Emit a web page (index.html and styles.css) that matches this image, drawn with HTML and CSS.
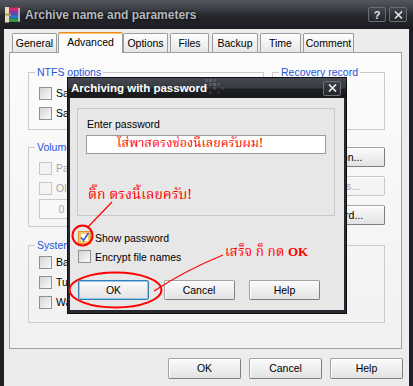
FILE: index.html
```html
<!DOCTYPE html>
<html lang="th">
<head>
  <meta charset="UTF-8" />
  <meta name="viewport" content="width=device-width, initial-scale=1.0"/>
  <title>Archive name and parameters</title>
  <link rel="stylesheet" href="styles.css">
</head>
<body>

<div class="window">
  <div class="titlebar">
    <svg class="app-icon" width="17" height="17" viewBox="0 0 17 17">
      <rect x="4" y="1.5" width="12" height="3.6" fill="#d02a6c"/>
      <rect x="4" y="5.1" width="12" height="3.6" fill="#7340b8"/>
      <rect x="4" y="8.7" width="12" height="3.6" fill="#2f6fd6"/>
      <rect x="4" y="12.3" width="12" height="3.6" fill="#2f9b4c"/>
      <rect x="14" y="2" width="2" height="13.5" fill="#f0e6c8" opacity="0.6"/>
      <rect x="1" y="1" width="4" height="15.5" fill="#e8dcb4"/>
      <rect x="1" y="7.5" width="6" height="2" fill="#b89a5a"/>
    </svg>
    <span class="title">Archive name and parameters</span>
    <div class="caption">
      <span class="cap-btn">?</span>
      <span class="cap-btn">
        <svg width="9" height="8" viewBox="0 0 9 8"><path d="M1 0.5 L8 7.5 M8 0.5 L1 7.5" stroke="#e4e4e4" stroke-width="1.6"/></svg>
      </span>
    </div>
  </div>

  <div class="client">
    <div class="tabs">
      <span class="tab">General</span>
      <span class="tab active">Advanced</span>
      <span class="tab">Options</span>
      <span class="tab">Files</span>
      <span class="tab">Backup</span>
      <span class="tab">Time</span>
      <span class="tab">Comment</span>
    </div>

    <div class="panel">
      <div class="row row-top">
        <fieldset class="group">
          <legend>NTFS options</legend>
          <label class="check"><span class="box"></span>Save file security</label>
          <label class="check"><span class="box"></span>Save file streams</label>
        </fieldset>
        <fieldset class="group">
          <legend>Recovery record</legend>
        </fieldset>
      </div>

      <div class="row row-mid">
        <fieldset class="group">
          <legend>Volumes</legend>
          <label class="check off"><span class="box"></span>Pause after each volume</label>
          <label class="check off"><span class="box"></span>Old style volume names</label>
          <div class="spin-row">
            <span class="spin">0</span>
            <span class="off-text">recovery volumes</span>
          </div>
        </fieldset>
        <div class="side-btns">
          <span class="btn">Compression...</span>
          <span class="btn off">SFX options...</span>
          <span class="btn">Set password...</span>
        </div>
      </div>

      <fieldset class="group system">
        <legend>System</legend>
        <label class="check"><span class="box"></span>Background archiving</label>
        <label class="check"><span class="box"></span>Turn off computer when done</label>
        <label class="check"><span class="box"></span>Wait if other WinRAR copies are active</label>
      </fieldset>
    </div>

    <div class="footer">
      <span class="btn">OK</span>
      <span class="btn">Cancel</span>
      <span class="btn">Help</span>
    </div>
  </div>

  <!-- password dialog on top -->
  <div class="dialog">
    <div class="dlg-title">
      <span>Archiving with password</span>
      <svg class="dots" width="24" height="20" viewBox="0 0 24 20">
        <rect x="0" y="1" width="3" height="3" fill="#fff" opacity="0.10"/>
        <rect x="4" y="1" width="3" height="3" fill="#fff" opacity="0.16"/>
        <rect x="8" y="1" width="3" height="3" fill="#fff" opacity="0.10"/>
        <rect x="4" y="5" width="3" height="3" fill="#fff" opacity="0.12"/>
        <rect x="8" y="5" width="3" height="3" fill="#fff" opacity="0.18"/>
        <rect x="12" y="5" width="3" height="3" fill="#fff" opacity="0.10"/>
        <rect x="0" y="9" width="3" height="3" fill="#fff" opacity="0.08"/>
        <rect x="8" y="9" width="3" height="3" fill="#fff" opacity="0.12"/>
        <rect x="16" y="9" width="3" height="3" fill="#fff" opacity="0.08"/>
        <rect x="4" y="13" width="3" height="3" fill="#fff" opacity="0.10"/>
        <rect x="12" y="13" width="3" height="3" fill="#fff" opacity="0.08"/>
      </svg>
      <span class="dlg-close">
        <svg width="9" height="8" viewBox="0 0 9 8"><path d="M1 0.5 L8 7.5 M8 0.5 L1 7.5" stroke="#f0f0f0" stroke-width="1.6"/></svg>
      </span>
    </div>
    <div class="dlg-body">
      <div class="pw-group">
        <div class="pw-label">Enter password</div>
        <div class="pw-input">ใส่พาสตรงช่องนี้เลยครับผม!</div>
        <div class="note">ติ๊ก ตรงนี้เลยครับ!</div>
      </div>
      <div class="dlg-checks">
        <label class="check"><span class="box checked">
          <svg width="11" height="11" viewBox="0 0 11 11"><path d="M2 5.5 L4.5 8.5 L9.5 1" fill="none" stroke="#2a5bd0" stroke-width="1.6"/></svg>
        </span>Show password</label>
        <label class="check"><span class="box"></span>Encrypt file names</label>
      </div>
      <div class="dlg-btns">
        <span class="btn focus">OK</span>
        <span class="btn">Cancel</span>
        <span class="btn">Help</span>
      </div>
    </div>
  </div>

  <div class="note note-done">เสร็จ ก็ กด <b>OK</b></div>

  <svg class="marks" width="413" height="386" viewBox="0 0 413 386">
    <ellipse cx="82.5" cy="235.5" rx="10" ry="10" fill="none" stroke="#ff0000" stroke-width="2"/>
    <path d="M88 227 L112 202" fill="none" stroke="#ff0000" stroke-width="1.2"/>
    <ellipse cx="115.5" cy="290" rx="46" ry="17.5" fill="none" stroke="#ff0000" stroke-width="2"/>
    <path d="M154 291 Q186 270 223 255" fill="none" stroke="#ff0000" stroke-width="1.2"/>
  </svg>
</div>

</body>
</html>
```

FILE: styles.css
```css
body {
  margin: 0;
  font-family: "Liberation Sans", Arial, sans-serif;
  font-size: 10.5px;
  color: #000;
  background: #fff;
}

.window {
  position: relative;
  width: 413px;
  height: 386px;
  overflow: hidden;
  background: #1e2026;
}

/* outer title bar */
.titlebar {
  height: 29px;
  display: flex;
  align-items: center;
  padding: 0 6px 0 4px;
  box-sizing: border-box;
  background: linear-gradient(#54575e 0, #393c42 35%, #24262c 55%, #1b1d22 100%);
}

.app-icon {
  flex: none;
  margin-right: 4px;
}

.title {
  flex: 1;
  font-weight: bold;
  font-size: 12px;
  color: #b3b7bd;
  text-shadow: 0 0 3px #000;
}

.caption {
  display: flex;
  gap: 3px;
}

.cap-btn {
  width: 18px;
  height: 15px;
  box-sizing: border-box;
  display: flex;
  align-items: center;
  justify-content: center;
  border: 1px solid #6c6f76;
  border-radius: 2px;
  background: linear-gradient(#44474d, #24262b);
  color: #e4e4e4;
  font-weight: bold;
  font-size: 11px;
}

/* client area */
.client {
  margin: 0 4px;
  height: 357px;
  background: #ececec;
}

.tabs {
  display: flex;
  align-items: flex-end;
  gap: 2px;
  height: 24px;
  padding-left: 8px;
  margin-bottom: -1px;
  position: relative;
  z-index: 1;
}

.tab {
  height: 19px;
  margin-bottom: 1px;
  box-sizing: border-box;
  border: 1px solid #9c9c9c;
  border-bottom: none;
  border-radius: 2px 2px 0 0;
  background: linear-gradient(#fefefe, #e6e6e6);
  text-align: center;
  line-height: 19px;
}

.tab:nth-child(1) { width: 45px; }
.tab:nth-child(2) { width: 65px; margin-left: -1px; }
.tab:nth-child(3) { width: 45px; margin-left: -2px; }
.tab:nth-child(4) { width: 39px; }
.tab:nth-child(5) { width: 46px; margin-left: 1px; }
.tab:nth-child(6) { width: 41px; }
.tab:nth-child(7) { width: 51px; }

.tab.active {
  height: 21px;
  margin-bottom: 0;
  background: #fcfcfc;
  border-top-color: #e68b2c;
  box-shadow: inset 0 1px 0 #ffc85a;
  line-height: 18px;
}

.panel {
  margin-left: 5px;
  width: 393px;
  height: 297px;
  box-sizing: border-box;
  border: 1px solid #9da1a5;
  background: linear-gradient(#fcfcfc, #f1f1f1);
  padding: 13px 16px 0 18px;
}

.row {
  display: grid;
  column-gap: 8px;
}

.row-top {
  grid-template-columns: 1fr 113px;
  height: 64px;
}

.row-mid {
  grid-template-columns: 1fr 104px;
  height: 86px;
  margin-top: 11px;
}

.group {
  margin: 0;
  min-width: 0;
  padding: 4px 10px 0;
  border: 1px solid #cbcbcb;
  box-sizing: border-box;
}

.group legend {
  margin-left: -4px;
  padding: 0 2px;
  line-height: 13px;
  color: #1e56d8;
}

.system {
  height: 84px;
  margin-top: 12px;
  padding-top: 0;
}

.check {
  display: flex;
  align-items: center;
  gap: 4px;
  height: 20px;
  white-space: nowrap;
}

.box {
  flex: none;
  width: 13px;
  height: 13px;
  box-sizing: border-box;
  border: 1px solid #8f9091;
  background: linear-gradient(135deg, #d4d4d4, #fbfbfb);
  display: flex;
  align-items: center;
  justify-content: center;
}

.box.checked {
  border-color: #d9952e;
  background: #fff;
  box-shadow: inset 0 0 0 2px #f7c46a;
}

.check.off {
  color: #a6a6a6;
}

.check.off .box {
  border-color: #c8c8c8;
  background: #f3f3f3;
}

.spin-row {
  display: flex;
  align-items: center;
  gap: 5px;
  margin-top: 1px;
  color: #a6a6a6;
}

.spin {
  width: 45px;
  height: 20px;
  box-sizing: border-box;
  border: 1px solid #c9c9c9;
  background: #f8f8f8;
  text-align: center;
  line-height: 18px;
}

.side-btns {
  display: flex;
  flex-direction: column;
  gap: 9px;
  padding-top: 6px;
}

.btn {
  display: block;
  height: 20px;
  box-sizing: border-box;
  border: 1px solid #a2a2a2;
  border-right-color: #7e7e7e;
  border-bottom-color: #7e7e7e;
  border-radius: 2px;
  background: linear-gradient(#fbfbfb, #e2e2e2);
  box-shadow: inset 1px 1px 0 #fff;
  text-align: center;
  line-height: 18px;
  white-space: nowrap;
}

.side-btns .btn {
  padding-right: 12px;
}

.btn.off {
  color: #a6a6a6;
  border-color: #c8c8c8;
  background: #f4f4f4;
}

.footer {
  display: flex;
  justify-content: flex-end;
  gap: 8px;
  margin-top: 9px;
  padding-right: 6px;
}

.footer .btn {
  width: 73px;
  height: 21px;
  line-height: 19px;
}

/* password dialog */
.dialog {
  position: absolute;
  left: 67px;
  top: 77px;
  width: 280px;
  height: 237px;
  box-sizing: border-box;
  border: 1px solid #0e0f12;
  background: #262930;
  padding: 0 2px 3px;
  display: flex;
  flex-direction: column;
  z-index: 2;
}

.dlg-title {
  height: 20px;
  display: flex;
  align-items: center;
  padding-left: 3px;
  margin: 0 -2px;
  padding-right: 5px;
  background: linear-gradient(#464950 0, #363940 50%, #1c1e23 56%, #17191d 100%);
  color: #fff;
  font-weight: bold;
  font-size: 11.5px;
}

.dots {
  flex: none;
  margin-left: -2px;
}

.dlg-close {
  margin-left: auto;
  width: 18px;
  height: 15px;
  box-sizing: border-box;
  border: 1px solid #6e7178;
  border-radius: 2px;
  background: linear-gradient(#3e4147, #23252a);
  display: flex;
  align-items: center;
  justify-content: center;
}

.dlg-body {
  flex: 1;
  background: #e7e7e7;
  padding: 10px 9px 0 7px;
}

.pw-group {
  height: 108px;
  box-sizing: border-box;
  border: 1px solid #c9c9c9;
  padding: 9px 8px 0 8px;
}

.pw-label {
  line-height: 13px;
  padding-left: 1px;
}

.pw-input {
  margin-top: 4px;
  height: 19px;
  box-sizing: border-box;
  border: 1px solid #9c9c9c;
  background: #fff;
  padding-left: 30px;
  line-height: 17px;
  color: #ff0000;
  font-family: "Noto Serif Thai", "Noto Sans Thai", "Loma", "Garuda", serif;
  font-size: 12.5px;
  white-space: nowrap;
  overflow: hidden;
}

.note {
  color: #ff0000;
  font-family: "Noto Serif Thai", "Noto Sans Thai", "Loma", "Garuda", serif;
  font-size: 14px;
  line-height: 20px;
  white-space: nowrap;
}

.pw-group .note {
  margin-top: 31px;
  margin-left: 2px;
}

.note b {
  font-family: "Liberation Serif", serif;
  font-size: 13px;
}

.note-done {
  position: absolute;
  left: 225px;
  top: 242px;
  font-size: 13.5px;
  z-index: 3;
}

.dlg-checks {
  margin-top: 12px;
  padding-left: 1px;
}

.dlg-checks .check {
  height: 19px;
}

.dlg-btns {
  display: flex;
  justify-content: space-between;
  margin-top: 14px;
  padding: 0 15px 0 1px;
}

.dlg-btns .btn {
  width: 71px;
}

.btn.focus {
  border-color: #3d7bad;
  box-shadow: inset 0 0 0 1px #8fcaf2;
}

.marks {
  position: absolute;
  left: 0;
  top: 0;
  z-index: 4;
  pointer-events: none;
}
```
